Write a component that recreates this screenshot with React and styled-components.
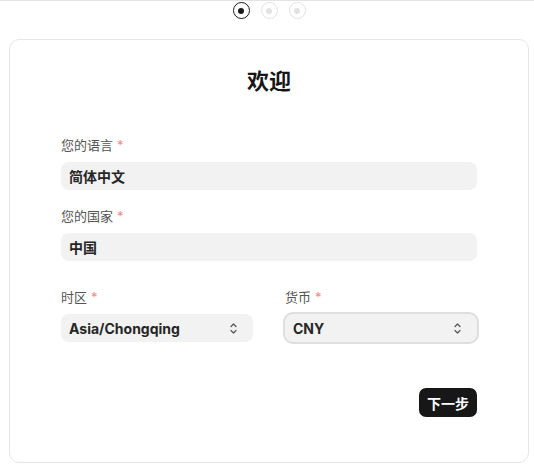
import React from 'react';
import styled, { createGlobalStyle } from 'styled-components';

const GlobalStyle = createGlobalStyle`
	body {
		margin: 0;
		background: #fff;
		font-family: Inter, "Noto Sans CJK SC", sans-serif;
		color: #1a1a1a;
	}
`;

const Page = styled.div`
	border-top: 1px solid #e3e3e3;
	padding: 1px 5px 8px 9px;
	width: 534px;
	box-sizing: border-box;
`;

const Steps = styled.div`
	display: flex;
	justify-content: center;
	gap: 11px;
	height: 18px;
	margin-bottom: 19px;
`;

const Dot = styled.span`
	width: 17px;
	height: 17px;
	box-sizing: border-box;
	border-radius: 50%;
	border: 1.5px solid ${(p) => (p.active ? '#1a1a1a' : '#e2e2e2')};
	display: flex;
	align-items: center;
	justify-content: center;

	&::after {
		content: '';
		width: 6px;
		height: 6px;
		border-radius: 50%;
		background: ${(p) => (p.active ? '#1a1a1a' : '#e2e2e2')};
	}
`;

const Card = styled.div`
	border: 1px solid #e6e6e6;
	border-radius: 10px;
	padding: 26px 51px 44px;
	height: 424px;
	box-sizing: border-box;
	display: flex;
	flex-direction: column;
`;

const Title = styled.h1`
	margin: 0 0 40px;
	font-size: 22px;
	line-height: 30px;
	font-weight: 700;
	text-align: center;
	color: #161616;
`;

const Field = styled.div`
	display: flex;
	flex-direction: column;
	gap: 8px;
	margin-bottom: ${(p) => p.space || 0}px;
	min-width: 0;
`;

const Label = styled.label`
	font-size: 13px;
	line-height: 18px;
	color: #555;

	span {
		color: #ef8a8a;
		margin-left: 4px;
	}
`;

const Box = styled.div`
	height: 28px;
	border-radius: 8px;
	background: #f2f2f2;
	display: flex;
	align-items: center;
	justify-content: space-between;
	padding: 0 14px 0 8px;
	box-sizing: border-box;
	font-size: 14px;
	font-weight: 700;
	color: #262626;
	box-shadow: ${(p) => (p.focused ? '0 0 0 2px #dedede' : 'none')};

	svg {
		color: #555;
	}
`;

const Row = styled.div`
	display: grid;
	grid-template-columns: 1fr 1fr;
	gap: 32px;
	margin-bottom: 46px;
`;

const Footer = styled.div`
	display: flex;
	justify-content: flex-end;
`;

const Button = styled.button`
	height: 29px;
	padding: 0 8px;
	border: none;
	border-radius: 7px;
	background: #171717;
	color: #fff;
	font-family: Inter, "Noto Sans CJK SC", sans-serif;
	font-size: 14px;
	font-weight: 600;
`;

const Chevrons = () => (
	<svg width="11" height="13" viewBox="0 0 11 13" fill="none" stroke="currentColor" strokeWidth="1.2" strokeLinecap="round" strokeLinejoin="round">
		<path d="M3 4.5 5.5 2 8 4.5" />
		<path d="M3 8.5 5.5 11 8 8.5" />
	</svg>
);

const App = () => (
	<>
		<GlobalStyle />
		<Page>
			<Steps>
				<Dot active />
				<Dot />
				<Dot />
			</Steps>
			<Card>
				<Title>欢迎</Title>
				<Field space={17}>
					<Label>您的语言<span>*</span></Label>
					<Box>简体中文</Box>
				</Field>
				<Field space={27}>
					<Label>您的国家<span>*</span></Label>
					<Box>中国</Box>
				</Field>
				<Row>
					<Field>
						<Label>时区<span>*</span></Label>
						<Box>
							Asia/Chongqing
							<Chevrons />
						</Box>
					</Field>
					<Field>
						<Label>货币<span>*</span></Label>
						<Box focused>
							CNY
							<Chevrons />
						</Box>
					</Field>
				</Row>
				<Footer>
					<Button>下一步</Button>
				</Footer>
			</Card>
		</Page>
	</>
);

export default App;
